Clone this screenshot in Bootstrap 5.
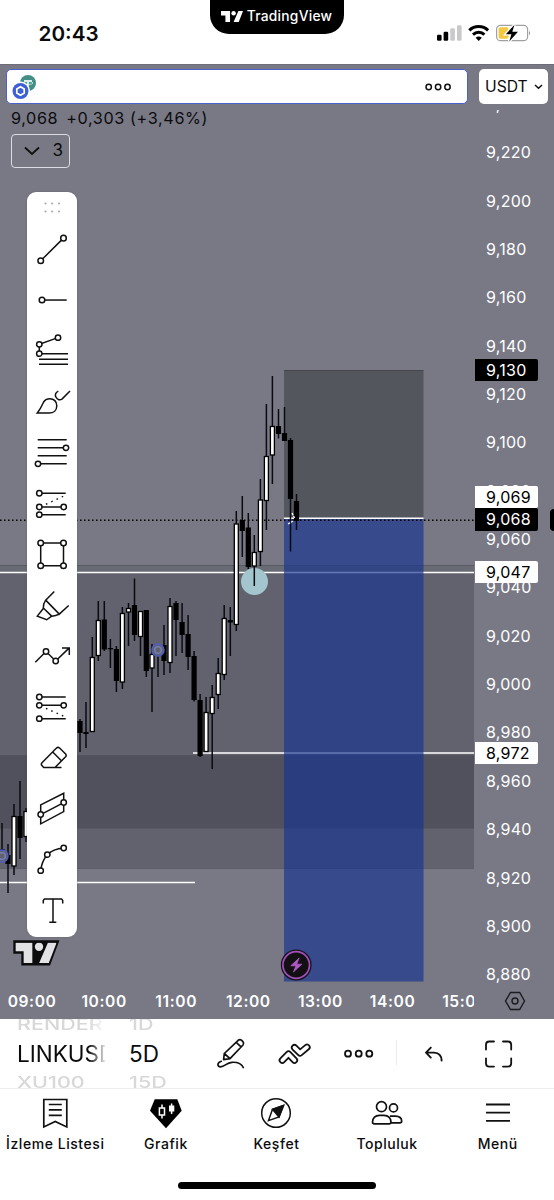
<!DOCTYPE html>
<html lang="tr">
<head>
<meta charset="utf-8">
<meta name="viewport" content="width=device-width, initial-scale=1">
<title>TradingView</title>
<link href="https://cdn.jsdelivr.net/npm/bootstrap@5.3.0/dist/css/bootstrap.min.css" rel="stylesheet">
<style>
  body { font-family: Inter, "Liberation Sans", sans-serif; color: #0b0b0d; background: #fff; }
  .phone { width: 554px; height: 1200px; }
  .statusbar { height: 64px; }
  .clock { font-size: 20.7px; font-weight: 600; padding: 3px 0 0 38.5px; }
  .island { top: 0; left: 210px; width: 134px; height: 34px; border-radius: 0 0 19px 19px; font-size: 13.8px; font-weight: 500; letter-spacing: .25px; padding-right: 1px; padding-bottom: 2px; }
  .chart { height: 955px; background: #787985; border-top: 1px solid #6c6d78; }
  .plot { top: -1px; left: 0; }
  .chart-head { height: 45px; padding: 4px 6px 0; gap: 11px; }
  .symbolbox { width: 462px; height: 35px; border: 1.6px solid #4a60cf; border-radius: 5px; padding-left: 2.5px; }
  .currency { width: 69px; height: 35px; border-radius: 5px; font-size: 15.7px; padding-left: 6px; }
  .chart-body { height: 873px; }
  .quote { font-size: 16.2px; line-height: 16px; letter-spacing: .62px; padding-left: 11px; }
  .collapse-btn { width: 59px; height: 34px; margin: 8px 0 0 11px; border: 1.5px solid #dcdce2; border-radius: 4px; font-size: 17px; }
  .price-axis { width: 80px; color: #fff; font-size: 16px; letter-spacing: .25px; }
  .tick { height: 48.35px; line-height: 48.35px; padding-left: 12px; flex: none; }
  .tick:first-child { margin-top: -30px; }
  .pricetag { left: 475px; width: 63px; height: 22.5px; line-height: 22.5px; padding-left: 11px; font-size: 16px; letter-spacing: .25px; border-radius: 0 2px 2px 0; }
  .time-axis { height: 36px; color: #fff; font-size: 15.6px; font-weight: 600; letter-spacing: .6px; }
  .times { width: 478px; margin-left: -4px; padding-top: 1px; }
  .times span { flex: 0 0 72.1px; text-align: center; }
  .tools { left: 27px; top: 127px; width: 50px; height: 745px; border-radius: 9px; box-shadow: 0 0 2px #5558; }
  .tools svg { flex: none; }
  .ic { fill: none; stroke: #111; stroke-width: 1.5; }
  .ic circle { fill: #fff; }
  .toolbar-row { height: 70px; border-bottom: 1px solid #ececee; }
  .wheel { height: 69px; font-size: 22.5px; line-height: 29px; flex: none; }
  .wheel div { height: 29px; white-space: nowrap; }
  .wheel .dim { color: #d8d8da; font-weight: 500; font-size: 21.5px; transform: scaleY(.72); }
  .wheel-symbol { width: 88px; margin-left: 17px; -webkit-mask-image: linear-gradient(90deg, #000 72px, transparent 90px); mask-image: linear-gradient(90deg, #000 72px, transparent 90px); }
  .wheel-interval { width: 60px; margin-left: 24px; }
  .tabs { height: 82px; }
  .tab { width: 110.6px; font-size: 14px; font-weight: 500; letter-spacing: .55px; padding-top: 8px; }
  .home { width: 198px; height: 6.5px; margin-top: 11px; border-radius: 4px; background: #000; }
</style>
</head>
<body>
<svg width="0" height="0" class="position-absolute">
  <symbol id="tv" viewBox="0 0 124 62"><path d="M0 0H51V62H25V26H0ZM98 0H124L100 62H71Z"/><circle cx="71" cy="12.5" r="12.5"/></symbol>
</svg>
<main class="phone position-relative overflow-hidden d-flex flex-column">
  <header class="statusbar d-flex align-items-center position-relative">
    <div class="clock">20:43</div>
    <div class="island position-absolute bg-black text-white d-flex align-items-center justify-content-center gap-1">
      <svg width="22" height="11" fill="#fff"><use href="#tv"/></svg><span>TradingView</span>
    </div>
    <svg class="ms-auto" style="margin-right:23px" width="96" height="24" viewBox="435 20.300 96 24">
      <g fill="#000"><rect x="437" y="35" width="4.6" height="6" rx="1.3"/><rect x="443.6" y="32" width="4.6" height="9" rx="1.3"/></g>
      <g fill="#c9c9cb"><rect x="450.3" y="28.5" width="4.6" height="12.5" rx="1.3"/><rect x="457" y="25.5" width="4.6" height="15.5" rx="1.3"/></g>
      <g fill="none" stroke="#000" stroke-width="3"><path d="M469.3 30.6A13.6 13.6 0 0 1 488.1 30.6"/><path d="M473 34.9A8.2 8.2 0 0 1 484.4 34.9"/></g>
      <path d="M475.6 38A4.8 4.8 0 0 1 481.8 38L478.7 41.2Z"/>
      <rect x="496.6" y="25.6" width="31" height="15.4" rx="4" fill="#fff" stroke="#a0a0a2" stroke-width="1.2"/>
      <rect x="498.6" y="27.6" width="10" height="11.4" rx="2" fill="#f3c944"/>
      <path d="M529 31Q531 33.300 529 35.600Z" fill="#8d8d8f"/>
      <path d="M514.5 25L505.800 34.600H511.400L509.200 41.800L518 32H512.300Z" fill="#000" stroke="#fff" stroke-width="2.6" paint-order="stroke"/>
    </svg>
  </header>

  <section class="chart position-relative">
    <svg class="plot position-absolute" width="554" height="955" viewBox="0 64 554 955">
      <rect y="565" width="474" height="8" fill="#686a74"/>
      <rect y="573" width="474" height="182" fill="#61626d"/>
      <rect y="755" width="474" height="73" fill="#50515d"/>
      <rect y="828" width="474" height="40" fill="#61626d"/>
      <path d="M0 565.500H474M0 755.500H474M0 828.500H474M0 868.500H474" stroke="#555660" stroke-width=".8"/>
      <path d="M0 572.500H474M193 753H474" stroke="#fff" stroke-width="1.600"/>
      <path d="M0 882.500H195" stroke="#fff" stroke-width="1.700"/>
      <circle cx="254.500" cy="581.500" r="13.500" fill="#a3c5cd"/>
      <rect x="284" y="370" width="139.500" height="148" fill="#54565d"/>
      <path d="M284 370.500H423.500" stroke="#45474d"/>
      <rect x="284" y="519" width="139.500" height="462.500" fill="rgb(24,52,143)" fill-opacity=".67"/>
      <path d="M284 518.300H423.500" stroke="#fff" stroke-width="1.600"/>
      <path d="M0 520.300H474" stroke="#000" stroke-width="1.500" stroke-dasharray="1.500 2.500"/>
      <g id="candles"></g>
      <path d="M288 524L293 521M292 513L294.500 518" stroke="#fff" stroke-width="1.300" stroke-dasharray="2.500 1"/>
      <g fill="none" stroke="#4e5fc4" stroke-width="1.500"><g fill="#60616d"><circle cx="158" cy="650" r="6"/><circle cx="2" cy="856" r="6"/></g><circle cx="158" cy="650" r="3.300" stroke="#777fb0"/><circle cx="2" cy="856" r="3.300" stroke="#777fb0"/></g>
      <path d="M13.300 940.300H59.500L50 965.400H21.300V953.700H13.300Z" fill="#0c0c0e"/>
      <svg x="15.300" y="942.600" width="41.400" height="20.700" fill="#e2e2e4"><use href="#tv"/></svg>
      <circle cx="296.200" cy="965" r="15.400" fill="#15121a"/><circle cx="296.200" cy="965" r="13.300" fill="#131014" stroke="#a24fb8" stroke-width="1.700"/>
      <path d="M299.200 958L290.800 965.800L296 965.800L293.400 972L301.800 964.200H296.600Z" fill="#b058c8" stroke="#b058c8" stroke-width=".8" stroke-linejoin="round"/>
      <path d="M550 513Q550 509 554 509V531Q550 531 550 527Z"/>
    </svg>

    <div class="chart-head position-relative d-flex">
      <div class="symbolbox bg-white d-flex align-items-center justify-content-between">
        <svg width="28" height="28" viewBox="10 73 28 28">
          <circle cx="28" cy="83" r="8" fill="#438f86"/><path d="M24 80H32V82H29V86H27V82H24Z" fill="#d9efeb"/><ellipse cx="28" cy="83" rx="5" ry="1.500" fill="none" stroke="#d9efeb" stroke-width=".8"/>
          <circle cx="20.500" cy="91" r="9.600" fill="#fff"/><circle cx="20.500" cy="91" r="8" fill="#3f5fd6"/>
          <path d="M20.500 86.800L24.200 88.900V93.100L20.500 95.200L16.800 93.100V88.900Z" fill="none" stroke="#fff" stroke-width="1.700"/>
        </svg>
        <svg width="26" height="8" viewBox="425 83.700 26 8" class="ic me-3"><g stroke-width="1.500"><circle cx="428.700" cy="87.700" r="2.700"/><circle cx="438.100" cy="87.700" r="2.700"/><circle cx="447.500" cy="87.700" r="2.700"/></g></svg>
      </div>
      <div class="currency bg-white d-flex align-items-center">USDT
        <svg width="9" height="6" class="ic ms-auto" style="margin-right:5px"><path d="M1 1L4.500 4.300L8 1"/></svg>
      </div>
    </div>

    <div class="chart-body position-relative d-flex justify-content-between overflow-hidden">
      <div>
        <div class="quote"><span class="me-2">9,068</span><span>+0,303 (+3,46%)</span></div>
        <div class="collapse-btn d-flex align-items-center">
          <svg width="16" height="10" class="ic" style="margin-left:12px"><path d="M1 1.500L8 8L15 1.500" stroke-width="1.900"/></svg>
          <span style="margin-left:12.500px">3</span>
        </div>
      </div>
      <div class="price-axis d-flex flex-column" id="ticks"></div>
    </div>

    <div class="time-axis position-relative d-flex align-items-center justify-content-between">
      <div class="times d-flex overflow-hidden"><span>09:00</span><span>10:00</span><span>11:00</span><span>12:00</span><span>13:00</span><span>14:00</span><span>15:00</span></div>
      <svg width="22" height="20" viewBox="503.500 991 22 20" fill="none" stroke="#1b1b20" stroke-width="1.400" style="margin-right:28.500px"><path d="M510 992.500H519.200L524 1001L519.200 1009.500H510L505 1001Z"/><circle cx="514.500" cy="1001" r="3"/></svg>
    </div>

    <div id="tags"></div>

    <nav class="tools position-absolute bg-white d-flex flex-column">
      <svg width="50" height="31.500" viewBox="27 192 50 31.500" fill="#aaa"><circle cx="45.500" cy="203.500" r="1.100"/><circle cx="52.200" cy="203.500" r="1.100"/><circle cx="58.900" cy="203.500" r="1.100"/><circle cx="45.500" cy="211.500" r="1.100"/><circle cx="52.200" cy="211.500" r="1.100"/><circle cx="58.900" cy="211.500" r="1.100"/></svg>
      <svg class="ic" width="50" height="50.900" viewBox="-25 -25.450 50 50.900"><path d="M-11.300 11.300L11.500 -11.300"/><circle cx="-11.300" cy="11.300" r="2.800"/><circle cx="11.500" cy="-11.300" r="2.800"/></svg>
      <svg class="ic" width="50" height="50.900" viewBox="-25 -25.450 50 50.900"><path d="M-10 .6H14.700"/><circle cx="-10" cy=".6" r="2.800"/></svg>
      <svg class="ic" width="50" height="50.900" viewBox="-25 -25.450 50 50.900"><path d="M6 -12.800L-12.700 -6.100V3.200H16M-13 8.700H16M-13 13.900H16"/><circle cx="-12.700" cy="-6.100" r="2.700"/><circle cx="6" cy="-12.800" r="2.700"/><circle cx="-12.700" cy="3.200" r="2.700"/></svg>
      <svg class="ic" width="50" height="50.900" viewBox="-25 -25.450 50 50.900"><path d="M-14.700 11.600C-11.500 7.500 -10 4 -8.600 1C-7.300 -1.500 -5 -2.800 -2.200 -2.800C2 -2.800 4.800 .2 4.800 4.200C4.800 9 1.500 11.600 -3 11.600ZM6.300 -10.400C3.500 -9 2.700 -6.500 4 -4.200C5.500 -1.500 8 -1 10 -2.300L18 -10.400"/></svg>
      <svg class="ic" width="50" height="50.900" viewBox="-25 -25.450 50 50.900"><path d="M-14.300 -12.600H14.700M-14.300 -4.600H14M-14.300 3.400H14.700M-14 11.400H14.700"/><circle cx="14" cy="-4.600" r="2.700"/><circle cx="-14" cy="11.400" r="2.700"/></svg>
      <svg class="ic" width="50" height="50.900" viewBox="-25 -25.450 50 50.900"><path d="M-12.700 -10.200H13.700M-12.700 3.500H11.700M-12.700 11.200H13.700"/><path d="M-6 .8L11.500 -7.300" stroke-dasharray="1.500 4.300"/><circle cx="-12.700" cy="-10.200" r="2.700"/><circle cx="-12.700" cy="3.500" r="2.700"/><circle cx="11.700" cy="3.500" r="2.700"/><circle cx="-12.700" cy="11.200" r="2.700"/></svg>
      <svg class="ic" width="50" height="50.900" viewBox="-25 -25.450 50 50.900"><path d="M-11.300 -11.400H11.500V11.300H-11.300Z"/><circle cx="-11.300" cy="-11.400" r="2.800"/><circle cx="11.500" cy="-11.400" r="2.800"/><circle cx="-11.300" cy="11.300" r="2.800"/><circle cx="11.500" cy="11.300" r="2.800"/></svg>
      <svg class="ic" width="50" height="50.900" viewBox="-25 -25.450 50 50.900"><path d="M2.300 -14L-6.300 -5.300L7.300 8.700L16.700 0M-6.300 -5.300C-8 -3 -8.700 -1 -8.700 2.600L-.3 10.700C3 10.600 5 10 7.300 8.700M-8.500 2.800L-14.700 10.700L-5.300 14.300L-.3 10.700"/></svg>
      <svg class="ic" width="50" height="50.900" viewBox="-25 -25.450 50 50.900"><path d="M-16.700 5.800L-6 -4.900L3.700 4.500L17 -8.300M10 -8.500H17.300V-1.500"/><circle cx="-6" cy="-4.900" r="2.700"/><circle cx="3.700" cy="4.500" r="2.700"/></svg>
      <svg class="ic" width="50" height="50.900" viewBox="-25 -25.450 50 50.900"><path d="M-12.700 -10.400H13.700M-12.700 -2.100H11.700M-12.700 11.200H13.700"/><path d="M-6 .9L11.500 8.700" stroke-dasharray="1.500 4.300"/><circle cx="-12.700" cy="-10.400" r="2.700"/><circle cx="-12.700" cy="-2.100" r="2.700"/><circle cx="11.700" cy="-2.100" r="2.700"/><circle cx="-12.700" cy="11.200" r="2.700"/></svg>
      <svg class="ic" width="50" height="50.900" viewBox="-25 -25.450 50 50.900"><path d="M9.500 10.100H-8.300L-10.300 7.900Q-11.200 6.500 -10 5.200L4.500 -9.400Q6 -10.800 7.600 -9.400L13.600 -3.400Q14.800 -2 13.600 -.6L3 10M.7 -5.400L9.400 3.400"/></svg>
      <svg class="ic" width="50" height="50.900" viewBox="-25 -25.450 50 50.900"><path d="M-11.300 -3.600L11.700 -15.200V3.100L-11.300 15.400ZM-11.300 6.100L11.700 -5.900"/><circle cx="-11.300" cy="6.100" r="2.700"/><circle cx="11.700" cy="-5.900" r="2.700"/></svg>
      <svg class="ic" width="50" height="50.900" viewBox="-25 -25.450 50 50.900"><path d="M-11.300 11.200Q-10.500 2 -4.700 -4.800Q1 -10.500 11.700 -11.500"/><circle cx="-11.300" cy="11.200" r="2.700"/><circle cx="-4.700" cy="-4.800" r="2.700"/><circle cx="11.700" cy="-11.500" r="2.700"/></svg>
      <svg class="ic" width="50" height="50.900" viewBox="-25 -25.450 50 50.900"><path d="M-8.700 -7V-10.200L-7.500 -11.400H9.500L10.700 -10.200V-7M1 -11.400V11.700M-2.700 11.700H4.300"/></svg>
    </nav>
  </section>

  <section class="toolbar-row d-flex">
    <div class="wheel wheel-symbol overflow-hidden"><div class="dim" style="margin-top:-9px">RENDER</div><div>LINKUSDT</div><div class="dim">XU100</div></div>
    <div class="wheel wheel-interval overflow-hidden"><div class="dim" style="margin-top:-9px">1D</div><div>5D</div><div class="dim">15D</div></div>
    <svg class="ic" width="365" height="69" viewBox="189 1019 365 69" stroke-linecap="round" stroke-linejoin="round">
      <g stroke-width="1.700">
        <path d="M224.300 1053.500L238.200 1040.300Q240 1039 241.700 1040.400L242.900 1041.600Q244.300 1043.200 243 1045L230 1058.700L223.600 1059.600ZM224.300 1053.500L230 1058.700M236.200 1042.300L241.300 1047"/>
        <path d="M221.300 1061.300C217 1062.500 217 1066.800 220.500 1066.800C225 1066.800 226 1062.600 232 1062.300C238 1062 241.500 1063.500 243.300 1067.500"/>
      </g>
      <path d="M282.300 1060.300L288.500 1054L294.500 1060.200" stroke-width="7.200"/>
      <path d="M282.300 1060.300L288.500 1054L294.500 1060.200" style="stroke:#fff" stroke-width="3.700"/>
      <path d="M294.500 1047.600L300 1053L307 1047.200" stroke-width="7.200"/>
      <path d="M294.500 1047.600L300 1053L307 1047.200" style="stroke:#fff" stroke-width="3.700"/>
      <g stroke-width="1.800"><circle cx="348" cy="1053.700" r="3"/><circle cx="358.700" cy="1053.700" r="3"/><circle cx="369.300" cy="1053.700" r="3"/></g>
      <path d="M396.500 1040.500V1065" style="stroke:#ececee" stroke-width="1"/>
      <path d="M430.800 1047.600L426 1052.600L430.800 1057.600M426.300 1052.600H434Q441.500 1053 441.600 1060.500" stroke-width="1.900"/>
      <path d="M494 1041.500H489.300Q486 1041.500 486 1044.800V1049.500M503 1041.500H507.800Q511.200 1041.500 511.200 1044.800V1049.500M486 1058.500V1063.200Q486 1066.600 489.300 1066.600H494M511.200 1058.500V1063.200Q511.200 1066.600 507.800 1066.600H503" stroke-width="1.800"/>
    </svg>
  </section>

  <nav class="tabs d-flex">
    <div class="tab d-flex flex-column align-items-center"><svg class="ic" width="36" height="32" viewBox="37.500 1097 36 32"><path d="M44.300 1099.500H67.300V1127L55.700 1121.500L44.300 1127ZM49.300 1104.500H62.300M49.300 1109.900H62.300M49.300 1115.300H62.300" stroke-width="1.700"/></svg><span class="text-nowrap mt-1">İzleme Listesi</span></div>
    <div class="tab d-flex flex-column align-items-center"><svg width="36" height="32" viewBox="148 1097 36 32"><path d="M154.700 1099.300H177.300L181.700 1110.700L166 1128.300L150 1110.700Z"/><path d="M162 1104.500V1107.500M162 1115.500V1118.500M159.400 1108H164.500V1115H159.400ZM171.600 1103.500V1114" fill="none" stroke="#fff" stroke-width="1.500"/><path d="M169 1105.500H174.300V1111.500H169Z" fill="#fff"/></svg><span class="mt-1">Grafik</span></div>
    <div class="tab d-flex flex-column align-items-center"><svg class="ic" width="36" height="32" viewBox="258.500 1097 36 32"><circle cx="276.500" cy="1113" r="14.300"/><path d="M284 1105.400L279.500 1117L269 1120.600L273 1109.300Z"/><path d="M284 1105.400L279.500 1117L273 1109.300Z" fill="#111"/></svg><span class="mt-1">Keşfet</span></div>
    <div class="tab d-flex flex-column align-items-center"><svg class="ic" width="36" height="32" viewBox="369.500 1097 36 32" stroke-linejoin="round"><g stroke-width="1.700"><circle cx="382" cy="1106.700" r="5"/><circle cx="394" cy="1107.900" r="4"/><path d="M380 1115.400H384.500Q391 1115.700 391.500 1122Q391.500 1123.900 389.600 1123.900H375Q373 1123.900 373 1122Q373.500 1115.700 380 1115.400ZM390.500 1116.200H396Q402 1116.500 402.200 1121Q402.200 1122.800 400.400 1122.800H391.500"/></g></svg><span class="mt-1">Topluluk</span></div>
    <div class="tab d-flex flex-column align-items-center"><svg class="ic" width="36" height="32" viewBox="479.700 1097 36 32"><path d="M485.700 1104.500H509.700M485.700 1112.700H509.700M485.700 1120.800H509.700" stroke-width="1.800"/></svg><span class="mt-1">Menü</span></div>
  </nav>
  <div class="home mx-auto"></div>
</main>

<script src="https://cdn.jsdelivr.net/npm/bootstrap@5.3.0/dist/js/bootstrap.bundle.min.js"></script>
<script>
  // x, high, low, body top, body bottom, rising
  const candles = [
    [2,823,850,849,850,0],[8,844,893,855,864,0],[14,804,875,816,866.5,1],[20,781,859,816,838,0],[26,808,842,811,837,1],
    [80,719,752,721,733,0],[86,702,748,732,734,0],[92.3,637,732,657,732,1],[98.3,601,661,620,656,1],[104.3,601,651,619.5,649.5,0],
    [110.4,639,668,648,649.3,0],[116.400,646,692,649,681,0],[122.400,607,689,613,682.5,1],[128.500,603,646,608,612.5,1],[134.500,578.500,641,605,635,0],
    [140.500,611,656,611,637,1],[146.300,610,677,610,671,0],[152,644,712,654,668.500,1],[158,644,677,646,656,0],[164,625,675,645,661,0],
    [170,598,673,606,663,1],[176,601,656,603,620,0],[182.100,603,653,622,635,0],[188.100,615,670,634,657,0],[194.100,651,701.500,656,700,0],
    [200.100,694,757,700,756,0],[206.100,697,752,712,752,1],[212.200,685,769,697,714,1],[218.200,658,709,673,695,1],[224.200,605,680,618,675,1],
    [230.300,607,656,620,622.500,0],[236.300,511,631,523.500,625,1],[242.300,496,557,520,531,0],[248.300,513,569,527.500,567,0],[254.300,535,586,552,566.500,1],
    [260.400,479,566,499.500,552,1],[266.400,404,530,456,501,1],[272.400,376,484,426,455.500,1],[278.500,409,438.500,426,434,0],[284.500,407,441,433,441,0],
    [290.500,438,551.500,440,499,0],[296.500,494,530,501,521,0]
  ];
  document.getElementById('candles').innerHTML = candles.map(([x, h, l, t, b, up]) =>
    `<path d="M${x} ${h}V${l}" stroke="#0a0b10" stroke-width="1.500"/>` +
    (up ? `<rect x="${x - 2}" y="${t + .5}" width="4" height="${b - t - 1}" fill="#fff" stroke="#000" stroke-width="1.300"/>`
        : `<rect x="${x - 2.6}" y="${t}" width="5.200" height="${b - t}" fill="#000"/>`)).join('');

  const fmt = v => (v / 1000).toFixed(3).replace('.', ',');
  let ticks = '';
  for (let v = 9240; v >= 8880; v -= 20) ticks += `<div class="tick">${fmt(v)}</div>`;
  document.getElementById('ticks').innerHTML = ticks;

  // value, centre inside the chart, dark style
  document.getElementById('tags').innerHTML =
    [[9130, 305, 1], [9069, 432, 0], [9068, 454.7, 1], [9047, 507, 0], [8972, 688, 0]].map(([v, y, dark]) =>
      `<div class="pricetag position-absolute ${dark ? 'bg-black text-white' : 'bg-white text-black'}" style="top:${y - 11.250}px">${fmt(v)}</div>`).join('');
</script>
</body>
</html>
